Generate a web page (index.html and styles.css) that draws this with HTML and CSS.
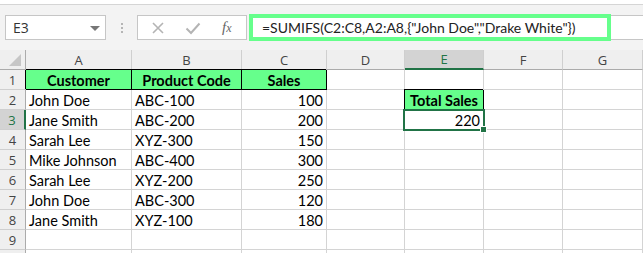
FILE: index.html
```html
<!DOCTYPE html>
<html lang="en">

<head>
    <meta charset="UTF-8" />
    <title>SUMIFS example</title>
    <link rel="stylesheet" href="styles.css">
</head>

<body>

    <div class="ribbon-edge"></div>

    <div class="formula-bar">
        <div class="name-box">
            <span>E3</span>
            <span class="drop"></span>
        </div>
        <div class="grip"><span></span><span></span><span></span></div>
        <div class="fx-buttons">
            <svg width="14" height="14" viewBox="0 0 14 14" class="icon">
                <path d="M2 2 L12 12 M12 2 L2 12" stroke="#b4b4b4" stroke-width="1.6" fill="none" />
            </svg>
            <svg width="16" height="14" viewBox="0 0 16 14" class="icon">
                <path d="M1.5 7.5 L6 12 L14.5 2.5" stroke="#b4b4b4" stroke-width="2" fill="none" />
            </svg>
            <span class="fx">f<i>x</i></span>
        </div>
        <div class="formula-input">
            <div class="formula-hl">=SUMIFS(C2:C8,A2:A8,{"John Doe","Drake White"})</div>
        </div>
    </div>

    <div class="sheet">
        <div class="hdr corner"><span class="tri"></span></div>
        <div class="hdr">A</div>
        <div class="hdr">B</div>
        <div class="hdr">C</div>
        <div class="hdr">D</div>
        <div class="hdr active-col">E</div>
        <div class="hdr">F</div>
        <div class="hdr">G</div>

        <div class="row-num">1</div>
        <div class="cell head">Customer</div>
        <div class="cell head">Product Code</div>
        <div class="cell head">Sales</div>
        <div class="cell"></div>
        <div class="cell"></div>
        <div class="cell"></div>
        <div class="cell"></div>

        <div class="row-num">2</div>
        <div class="cell">John Doe</div>
        <div class="cell">ABC-100</div>
        <div class="cell num">100</div>
        <div class="cell"></div>
        <div class="cell head">Total Sales</div>
        <div class="cell"></div>
        <div class="cell"></div>

        <div class="row-num active-row">3</div>
        <div class="cell">Jane Smith</div>
        <div class="cell">ABC-200</div>
        <div class="cell num">200</div>
        <div class="cell"></div>
        <div class="cell num selected">220<span class="sel-box"><span class="handle"></span></span></div>
        <div class="cell"></div>
        <div class="cell"></div>

        <div class="row-num">4</div>
        <div class="cell">Sarah Lee</div>
        <div class="cell">XYZ-300</div>
        <div class="cell num">150</div>
        <div class="cell"></div>
        <div class="cell"></div>
        <div class="cell"></div>
        <div class="cell"></div>

        <div class="row-num">5</div>
        <div class="cell">Mike Johnson</div>
        <div class="cell">ABC-400</div>
        <div class="cell num">300</div>
        <div class="cell"></div>
        <div class="cell"></div>
        <div class="cell"></div>
        <div class="cell"></div>

        <div class="row-num">6</div>
        <div class="cell">Sarah Lee</div>
        <div class="cell">XYZ-200</div>
        <div class="cell num">250</div>
        <div class="cell"></div>
        <div class="cell"></div>
        <div class="cell"></div>
        <div class="cell"></div>

        <div class="row-num">7</div>
        <div class="cell">John Doe</div>
        <div class="cell">ABC-300</div>
        <div class="cell num">120</div>
        <div class="cell"></div>
        <div class="cell"></div>
        <div class="cell"></div>
        <div class="cell"></div>

        <div class="row-num">8</div>
        <div class="cell">Jane Smith</div>
        <div class="cell">XYZ-100</div>
        <div class="cell num">180</div>
        <div class="cell"></div>
        <div class="cell"></div>
        <div class="cell"></div>
        <div class="cell"></div>

        <div class="row-num">9</div>
        <div class="cell"></div>
        <div class="cell"></div>
        <div class="cell"></div>
        <div class="cell"></div>
        <div class="cell"></div>
        <div class="cell"></div>
        <div class="cell"></div>

        <!-- next row only peeks in at the bottom edge -->
        <div class="row-num"></div>
        <div class="cell"></div>
        <div class="cell"></div>
        <div class="cell"></div>
        <div class="cell"></div>
        <div class="cell"></div>
        <div class="cell"></div>
        <div class="cell"></div>
    </div>

</body>

</html>
```

FILE: styles.css
```css
body {
    margin: 0;
    padding: 0;
    width: 643px;
    height: 253px;
    overflow: hidden;
    background: #ffffff;
    font-family: Lato, "Open Sans", sans-serif;
}

.ribbon-edge {
    height: 4px;
    background: #ffffff;
    border-bottom: 1px solid #d5d5d5;
}

/* formula bar */
.formula-bar {
    display: flex;
    align-items: center;
    height: 45px;
    padding-left: 5px;
    background: #f3f3f3;
    box-sizing: border-box;
    padding-bottom: 10px;
    padding-top: 10px;
}

.name-box {
    width: 101px;
    height: 25px;
    box-sizing: border-box;
    background: #fff;
    border: 1px solid #c6c6c6;
    display: flex;
    align-items: center;
    justify-content: space-between;
    padding: 0 5px 0 7px;
    font-family: "Open Sans", sans-serif;
    font-size: 14px;
    color: #333;
}

.drop {
    width: 0;
    height: 0;
    border-left: 5px solid transparent;
    border-right: 5px solid transparent;
    border-top: 5px solid #777;
    margin-top: 1px;
}

.grip {
    width: 31px;
    display: flex;
    flex-direction: column;
    align-items: center;
    gap: 2px;
}

.grip span {
    width: 2px;
    height: 2px;
    background: #b5b5b5;
}

.fx-buttons {
    width: 110px;
    height: 25px;
    box-sizing: border-box;
    background: #fff;
    border: 1px solid #c6c6c6;
    display: flex;
    align-items: center;
    padding-left: 13px;
    gap: 20px;
}

.fx {
    font-family: "Liberation Serif", serif;
    font-style: italic;
    font-size: 15px;
    color: #666;
    margin-left: 1px;
}

.fx i {
    font-size: 12px;
}

.formula-input {
    flex: 1;
    height: 25px;
    margin-left: 2px;
    box-sizing: border-box;
    background: #fff;
    border: 1px solid #c6c6c6;
    border-right: none;
    position: relative;
}

.formula-hl {
    position: absolute;
    left: -1px;
    top: -2px;
    width: 362px;
    height: 27px;
    box-sizing: border-box;
    border: 4px solid #66ff8c;
    padding-left: 9px;
    font-size: 14px;
    line-height: 19px;
    color: #222;
    white-space: nowrap;
}

/* grid */
.sheet {
    display: grid;
    grid-template-columns: 26px 106px 110px 85px 78px 79px 79px 80px;
    grid-auto-rows: 20px;
}

.hdr {
    background: #efefef;
    border-right: 1px solid #cfcfcf;
    border-bottom: 1px solid #ababab;
    font-family: "Open Sans", sans-serif;
    font-size: 13px;
    color: #444;
    text-align: center;
    line-height: 20px;
}

.corner {
    position: relative;
    border-right-color: #ababab;
}

.tri {
    position: absolute;
    right: 4px;
    bottom: 3px;
    width: 0;
    height: 0;
    border-left: 12px solid transparent;
    border-bottom: 12px solid #c6c6c6;
}

.active-col {
    background: #d3d3d3;
    color: #217346;
    border-bottom: 2px solid #217346;
    line-height: 19px;
}

.row-num {
    background: #efefef;
    border-right: 1px solid #ababab;
    border-bottom: 1px solid #cfcfcf;
    font-family: "Open Sans", sans-serif;
    font-size: 13px;
    color: #444;
    text-align: center;
    line-height: 20px;
}

.active-row {
    background: #d3d3d3;
    color: #217346;
    border-right: 2px solid #217346;
}

.cell {
    border-right: 1px solid #d4d4d4;
    border-bottom: 1px solid #d4d4d4;
    font-size: 14.5px;
    line-height: 21px;
    color: #000;
    padding: 0 3px;
    white-space: nowrap;
    overflow: hidden;
}

.num {
    text-align: right;
}

.head {
    background: #66ff8c;
    font-weight: bold;
    text-align: center;
    border-right-color: #000;
    border-bottom-color: #000;
    box-shadow: -1px -1px 0 #000;
}

.selected {
    position: relative;
    overflow: visible;
}

.sel-box {
    position: absolute;
    left: -2px;
    top: -1px;
    right: -2px;
    bottom: -2px;
    border: 2px solid #217346;
}

.handle {
    position: absolute;
    right: -4px;
    bottom: -4px;
    width: 5px;
    height: 5px;
    background: #217346;
    border: 1px solid #fff;
}
```
